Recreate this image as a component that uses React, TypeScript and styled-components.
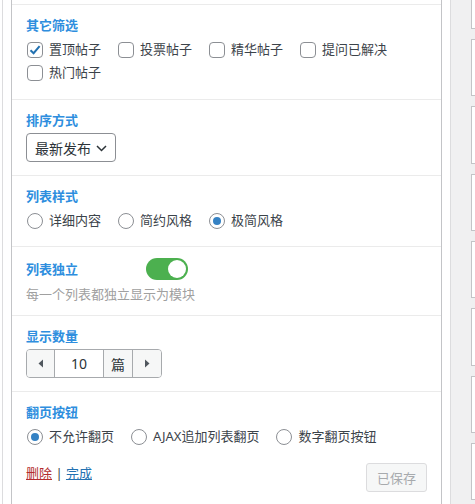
import React from 'react';
import styled, { createGlobalStyle } from 'styled-components';

const GlobalStyle = createGlobalStyle`
  html, body {
    margin: 0;
    padding: 0;
    background: #fff;
    overflow: hidden;
  }
  body {
    font-family: "Noto Sans", "Noto Sans CJK SC", sans-serif;
    font-size: 13px;
    color: #3c434a;
  }
`;

const Page = styled.div`
  display: flex;
  height: 100vh;
  overflow: hidden;
  padding-left: 2px;
`;

const Wrap = styled.div`
  width: 431px;
  flex-shrink: 0;
  display: flex;
  flex-direction: column;
  padding: 0 8px;
  border-left: 1px solid #dcdcde;
  border-right: 1px solid #dcdcde;
`;

const Panel = styled.div`
  flex: 1;
  background: #fff;
  border-left: 1px solid #c3c4c7;
  border-right: 1px solid #c3c4c7;
  padding-top: 4px;
`;

const Section = styled.div`
  border-top: 1px solid #ebebeb;
  padding: 11px 14px ${(p: { $bottom?: number }) => p.$bottom ?? 14}px;
`;

const Title = styled.div`
  font-weight: bold;
  color: #2e8ede;
  line-height: 18px;
  height: 18px;
`;

const Options = styled.div`
  display: flex;
  flex-wrap: wrap;
  column-gap: 16px;
  margin-top: 4px;
`;

const Option = styled.label`
  display: inline-flex;
  align-items: center;
  gap: 6px;
  height: 23px;
  line-height: 23px;
  padding-left: 1px;
  white-space: nowrap;
`;

const Box = styled.span`
  width: 16px;
  height: 16px;
  box-sizing: border-box;
  border: 1px solid #8c8f94;
  border-radius: 4px;
  display: inline-flex;
  align-items: center;
  justify-content: center;
  background: #fff;
`;

const Radio = styled.span<{ $checked?: boolean }>`
  width: 16px;
  height: 16px;
  box-sizing: border-box;
  border: 1px solid #8c8f94;
  border-radius: 50%;
  display: inline-flex;
  align-items: center;
  justify-content: center;
  background: #fff;

  &::after {
    content: '';
    width: 8px;
    height: 8px;
    border-radius: 50%;
    background: ${(p) => (p.$checked ? '#3582c4' : 'transparent')};
  }
`;

const Select = styled.div`
  margin-top: 4px;
  display: inline-flex;
  align-items: center;
  gap: 5px;
  height: 29px;
  box-sizing: border-box;
  padding: 0 8px;
  border: 1px solid #8c8f94;
  border-radius: 4px;
  font-size: 14px;
  color: #2c3338;
`;

const SwitchRow = styled.div`
  display: flex;
  align-items: center;
  height: 22px;

  ${Title} {
    width: 120px;
  }
`;

const Toggle = styled.span<{ $on?: boolean }>`
  width: 42px;
  height: 22px;
  border-radius: 11px;
  background: ${(p) => (p.$on ? '#4cb04f' : '#ccc')};
  display: inline-flex;
  align-items: center;
  justify-content: ${(p) => (p.$on ? 'flex-end' : 'flex-start')};
  padding: 0 2px;
  box-sizing: border-box;

  &::after {
    content: '';
    width: 18px;
    height: 18px;
    border-radius: 50%;
    background: #fff;
  }
`;

const Hint = styled.div`
  margin-top: 5px;
  line-height: 18px;
  color: #a0a0a0;
`;

const Stepper = styled.div`
  margin-top: 4px;
  display: inline-flex;
  height: 29px;
  box-sizing: border-box;
  border: 1px solid #a7aaad;
  border-radius: 4px;
  overflow: hidden;
`;

const StepCell = styled.span<{ $w: number; $shade?: boolean }>`
  width: ${(p) => p.$w}px;
  display: flex;
  align-items: center;
  justify-content: center;
  background: ${(p) => (p.$shade ? '#f6f7f7' : '#fff')};
  color: #2c3338;
  font-size: 14px;
  & + & {
    border-left: 1px solid #a7aaad;
  }
`;

const Footer = styled.div`
  display: flex;
  justify-content: space-between;
  align-items: flex-start;
  margin-top: 15px;
`;

const Links = styled.div`
  line-height: 20px;
  color: #3c434a;
`;

const TextLink = styled.a<{ $danger?: boolean }>`
  color: ${(p) => (p.$danger ? '#b32d2e' : '#2271b1')};
  text-decoration: underline;
`;

const SaveButton = styled.button`
  height: 29px;
  padding: 0 10px;
  font: inherit;
  font-size: 13px;
  color: #a7aaad;
  background: #f6f7f7;
  border: 1px solid #dcdcde;
  border-radius: 3px;
`;

const Side = styled.div`
  flex: 1;
  background: #f0f0f1;
  display: flex;
  flex-direction: column;
  gap: 10px;
  padding-left: 20px;
  overflow: hidden;
`;

const Widget = styled.div<{ $partial?: boolean }>`
  width: 100px;
  flex-shrink: 0;
  height: ${(p) => (p.$partial ? '29px' : '57.33px')};
  box-sizing: border-box;
  background: #fff;
  border: 1px solid #c3c4c7;
  border-top-width: ${(p) => (p.$partial ? 0 : 1)}px;
`;

const Check = () => (
  <svg width="14" height="14" viewBox="0 0 14 14">
    <path d="M2.5 7.2 L5.6 10.2 L11.6 3.2" fill="none" stroke="#2271b1" strokeWidth="2" />
  </svg>
);

const Chevron = () => (
  <svg width="11" height="10" viewBox="0 0 11 10">
    <path d="M1 3 L5.5 7.5 L10 3" fill="none" stroke="#2c3338" strokeWidth="1.5" />
  </svg>
);

const Caret = ({ dir }: { dir: 'left' | 'right' }) => (
  <svg width="6" height="9" viewBox="0 0 6 9">
    <path d={dir === 'left' ? 'M5 0.5 L0.5 4.5 L5 8.5 Z' : 'M1 0.5 L5.5 4.5 L1 8.5 Z'} fill="#50575e" />
  </svg>
);

const filters = [
  { label: '置顶帖子', checked: true },
  { label: '投票帖子' },
  { label: '精华帖子' },
  { label: '提问已解决' },
  { label: '热门帖子' },
];

const styles = [
  { label: '详细内容' },
  { label: '简约风格' },
  { label: '极简风格', checked: true },
];

const paging = [
  { label: '不允许翻页', checked: true },
  { label: 'AJAX追加列表翻页' },
  { label: '数字翻页按钮' },
];

const App: React.FC = () => {
  return (
    <>
      <GlobalStyle />
      <Page>
        <Wrap>
          <Panel>
            <Section $bottom={15}>
              <Title>其它筛选</Title>
              <Options>
                {filters.map((f) => (
                  <Option key={f.label}>
                    <Box>{f.checked && <Check />}</Box>
                    {f.label}
                  </Option>
                ))}
              </Options>
            </Section>

            <Section $bottom={13}>
              <Title>排序方式</Title>
              <Select>
                最新发布
                <Chevron />
              </Select>
            </Section>

            <Section>
              <Title>列表样式</Title>
              <Options>
                {styles.map((s) => (
                  <Option key={s.label}>
                    <Radio $checked={s.checked} />
                    {s.label}
                  </Option>
                ))}
              </Options>
            </Section>

            <Section $bottom={12}>
              <SwitchRow>
                <Title>列表独立</Title>
                <Toggle $on />
              </SwitchRow>
              <Hint>每一个列表都独立显示为模块</Hint>
            </Section>

            <Section $bottom={13}>
              <Title>显示数量</Title>
              <Stepper>
                <StepCell $w={27} $shade>
                  <Caret dir="left" />
                </StepCell>
                <StepCell $w={48}>10</StepCell>
                <StepCell $w={28} $shade>
                  篇
                </StepCell>
                <StepCell $w={28} $shade>
                  <Caret dir="right" />
                </StepCell>
              </Stepper>
            </Section>

            <Section>
              <Title>翻页按钮</Title>
              <Options>
                {paging.map((p) => (
                  <Option key={p.label}>
                    <Radio $checked={p.checked} />
                    {p.label}
                  </Option>
                ))}
              </Options>
              <Footer>
                <Links>
                  <TextLink $danger>删除</TextLink> | <TextLink>完成</TextLink>
                </Links>
                <SaveButton disabled>已保存</SaveButton>
              </Footer>
            </Section>
          </Panel>
        </Wrap>
        <Side>
          <Widget $partial />
          <Widget />
          <Widget />
          <Widget />
          <Widget />
          <Widget />
          <Widget />
          <Widget />
        </Side>
      </Page>
    </>
  );
};

export default App;
